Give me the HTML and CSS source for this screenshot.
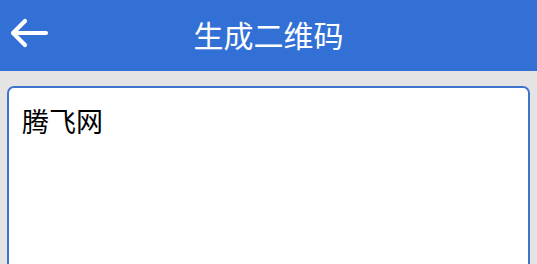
FILE: index.html
```html
<!DOCTYPE html>
<html lang="zh-CN">
  <head>
    <meta charset="UTF-8" />
    <meta name="viewport" content="width=device-width, initial-scale=1.0" />
    <title>生成二维码</title>
    <link rel="stylesheet" href="styles.css">
  </head>
  <body>
    <header class="top-bar">
      <a class="back" href="#">
        <svg width="40" height="30" viewBox="0 0 40 30">
          <path d="M4 15 H37 M16 3 L4 15 L16 27" fill="none" stroke="#fff" stroke-width="4.2" stroke-linecap="round" stroke-linejoin="round" />
        </svg>
      </a>
      <h1 class="title">生成二维码</h1>
    </header>
    <main class="content">
      <textarea class="input">腾飞网</textarea>
    </main>
  </body>
</html>
```
FILE: styles.css
```css
body {
  margin: 0;
  background: #e4e4e4;
  font-family: "Noto Sans CJK SC", "Noto Sans", sans-serif;
  overflow: hidden;
}

.top-bar {
  position: relative;
  height: 71px;
  background: #3370d6;
  display: flex;
  align-items: center;
  justify-content: center;
}

.back {
  position: absolute;
  left: 9px;
  top: 18px;
  display: block;
  line-height: 0;
}

.title {
  margin: 0;
  color: #fff;
  font-size: 30px;
  font-weight: normal;
  line-height: 1;
  padding-bottom: 4px;
}

.content {
  padding: 15px 7px 0 7px;
}

.input {
  box-sizing: border-box;
  display: block;
  width: 100%;
  height: 190px;
  margin: 0;
  padding: 15px 13px 13px;
  border: 2px solid #3f74cc;
  border-radius: 7px;
  background: #fff;
  font-family: inherit;
  font-size: 27px;
  line-height: 1.3;
  color: #000;
  resize: none;
  outline: none;
}
```
